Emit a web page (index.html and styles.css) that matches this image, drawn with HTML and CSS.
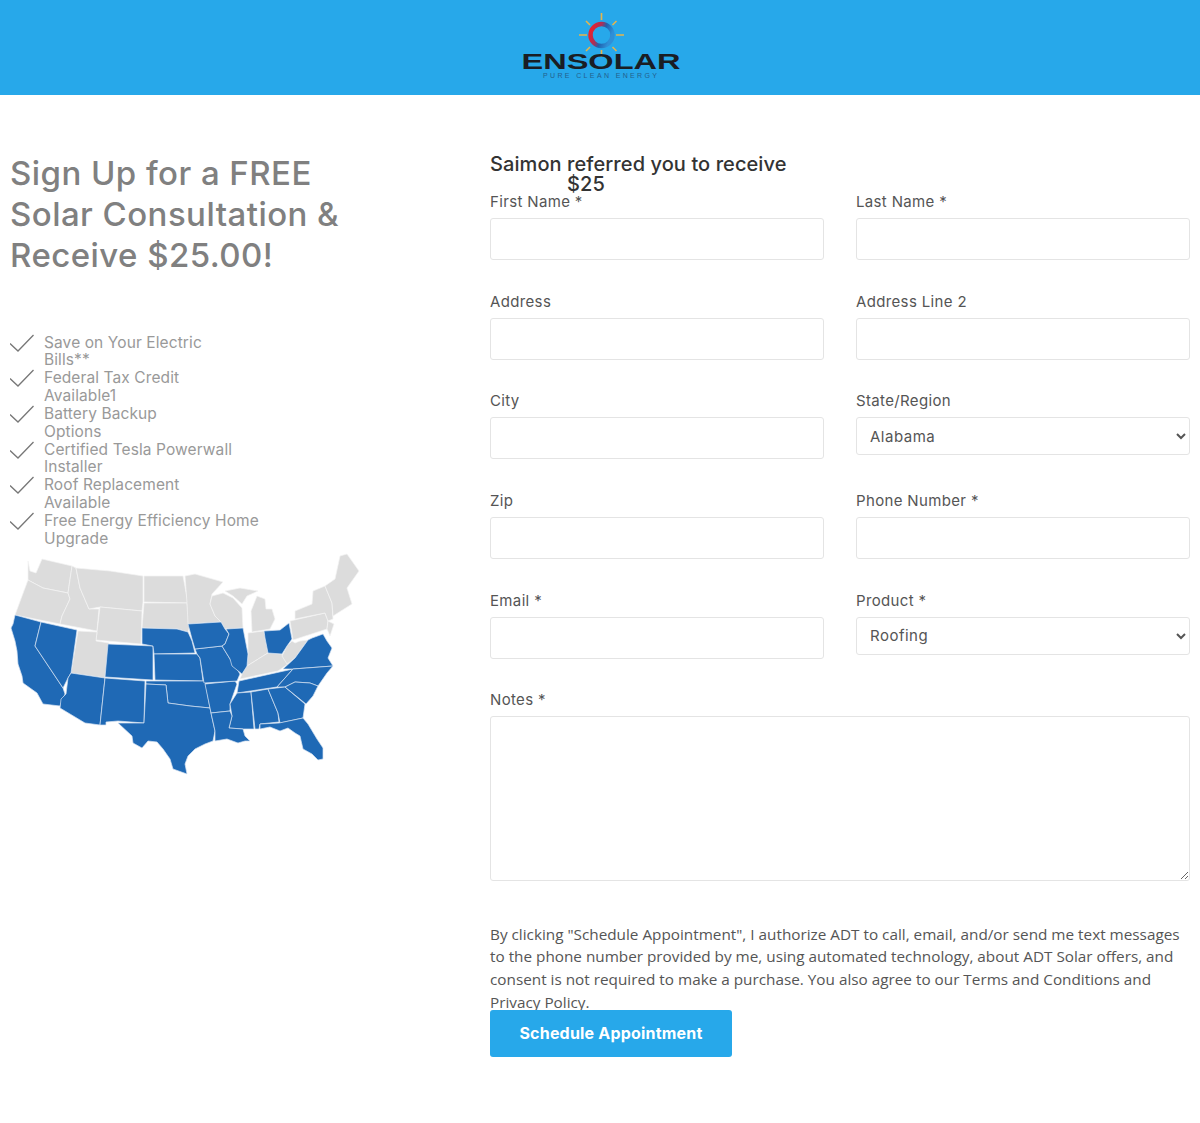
FILE: index.html
```html
<!DOCTYPE html>
<html>
<head>
  <title>Ensolar - Sign Up</title>
  <link rel="stylesheet" href="styles.css">
</head>
<body>
  <header class="topbar">
    <svg class="logo" width="200" height="95" viewBox="500 0 200 95">
      <defs>
        <linearGradient id="ringGrad" x1="0" y1="0" x2="1" y2="0.4">
          <stop offset="0.1" stop-color="#e8202c"/>
          <stop offset="0.45" stop-color="#a8305a"/>
          <stop offset="0.65" stop-color="#1f62ad"/>
          <stop offset="1" stop-color="#2f8fd8"/>
        </linearGradient>
      </defs>
      <g class="rays">
        <path d="M601.5 13v7M601.5 50v7M579 35h8M616 35h8M586 21l4 4M616.500 21l-4 4M586 51l4-4M616.500 51l-4-4"/>
      </g>
      <circle class="ring" cx="601.500" cy="35" r="11"/>
      <text class="logo-name" x="521.500" y="68.500" textLength="159" lengthAdjust="spacingAndGlyphs">ENSOLAR</text>
      <text class="logo-tag" x="543" y="78" textLength="114">PURE CLEAN ENERGY</text>
    </svg>
  </header>

  <main class="page">
    <section class="intro">
      <h1>Sign Up for a FREE Solar Consultation &amp; Receive $25.00!</h1>

      <ul class="benefits">
        <li><svg class="check" width="24" height="18" viewBox="0 0 24 18"><path d="M0 9.500l8 7.500L23.500 1"/></svg><span>Save on Your Electric<br>Bills**</span></li>
        <li><svg class="check" width="24" height="18" viewBox="0 0 24 18"><path d="M0 9.500l8 7.500L23.500 1"/></svg><span>Federal Tax Credit<br>Available1</span></li>
        <li><svg class="check" width="24" height="18" viewBox="0 0 24 18"><path d="M0 9.500l8 7.500L23.500 1"/></svg><span>Battery Backup<br>Options</span></li>
        <li><svg class="check" width="24" height="18" viewBox="0 0 24 18"><path d="M0 9.500l8 7.500L23.500 1"/></svg><span>Certified Tesla Powerwall<br>Installer</span></li>
        <li><svg class="check" width="24" height="18" viewBox="0 0 24 18"><path d="M0 9.500l8 7.500L23.500 1"/></svg><span>Roof Replacement<br>Available</span></li>
        <li><svg class="check" width="24" height="18" viewBox="0 0 24 18"><path d="M0 9.500l8 7.500L23.500 1"/></svg><span>Free Energy Efficiency Home<br>Upgrade</span></li>
      </ul>

      <svg class="map" width="360" height="235" viewBox="10 545 360 235">
        <g class="st-off">
          <polygon points="28,560 30,570 36,572 42,558 72,565 68,592 43,587 28,579"/>
          <polygon points="28,579 43,587 68,592 70,598 62,615 60,623 15,614 22,595"/>
          <polygon points="72,565 76,567 80,587 89,608 99,608 97,630 60,623 62,615 70,598 68,592"/>
          <polygon points="76,567 110,570 143,575 143,601 142,610 100,606 89,608 80,587"/>
          <polygon points="100,606 142,610 141,643 96,639"/>
          <polygon points="144,575 183,575 188,602 144,601"/>
          <polygon points="144,602 187,602 190,625 188,631 177,628 142,627"/>
          <polygon points="78,630 97,631 96,640 109,642 105,677 71,672"/>
          <polygon points="185,575 195,573 209,577 223,581 212,593 210,603 215,615 221,621 188,623 187,602"/>
          <polygon points="212,595 223,592 233,597 242,607 243,627 225,628 221,621 215,615 210,603"/>
          <polygon points="225,590 240,587 258,590 247,595 242,603 233,595"/>
          <polygon points="257,595 265,598 266,608 272,608 275,618 270,628 252,631 251,610"/>
          <polygon points="248,632 264,630 268,652 263,655 247,665 248,653"/>
          <polygon points="247,665 263,655 268,652 282,653 288,663 278,670 240,678 242,673"/>
          <polygon points="282,655 287,645 292,640 295,642 300,640 308,639 302,647 295,657 287,663"/>
          <polygon points="290,620 325,612 328,620 327,628 293,639"/>
          <polygon points="295,610 312,603 313,590 325,585 332,602 333,618 328,620 325,612 295,618"/>
          <polygon points="325,585 335,578 340,555 347,553 359,570 347,587 352,603 333,615 332,602"/>
          <polygon points="328,620 334,623 330,635 327,628"/>
        </g>
        <g class="st-on">
          <polygon points="15,614 41,621 35,645 63,687 65,693 60,705 43,703 37,692 30,687 23,682 22,675 18,663 17,650 15,640 11,627 13,623"/>
          <polygon points="41,621 77,629 71,672 68,677 63,687 35,645"/>
          <polygon points="71,672 105,677 100,724 85,722 60,707 61,698 66,693 68,677"/>
          <polygon points="105,677 145,680 144,722 118,720 106,721 106,724 100,724"/>
          <polygon points="108,643 153,645 153,679 105,676"/>
          <polygon points="142,627 177,628 188,631 192,640 195,652 154,653 153,645 142,643"/>
          <polygon points="154,653 197,653 200,657 203,680 155,679"/>
          <polygon points="146,680 205,680 210,707 190,705 168,702 166,684 146,683"/>
          <polygon points="146,683 166,684 168,702 190,705 210,707 211,712 215,730 213,740 205,743 195,748 188,755 185,763 187,773 173,768 170,758 163,748 157,741 148,740 142,747 133,742 132,735 118,722 144,722"/>
          <polygon points="205,683 235,680 237,683 230,703 230,710 211,712 210,707"/>
          <polygon points="195,648 222,645 230,658 235,665 240,673 237,680 204,682 200,657 197,653"/>
          <polygon points="188,623 221,621 225,628 229,633 225,643 222,645 195,648 192,638"/>
          <polygon points="226,628 243,627 248,653 247,665 242,673 232,665 230,658 222,645 225,643 229,633"/>
          <polygon points="264,630 280,629 289,622 292,638 287,645 282,653 268,652 265,637"/>
          <polygon points="239,680 293,668 277,686 237,692"/>
          <polygon points="283,668 295,657 308,639 312,637 323,633 327,640 332,647 328,657 333,665 293,668"/>
          <polygon points="277,686 293,668 333,665 327,672 318,685 310,682 295,681 285,686"/>
          <polygon points="237,692 251,691 254,728 243,728 229,727 232,715 230,703"/>
          <polygon points="211,712 230,710 232,715 229,727 243,728 245,735 250,740 245,740 238,742 227,738 215,740 215,730"/>
          <polygon points="251,691 268,688 278,712 279,721 260,723 259,728 255,728"/>
          <polygon points="268,688 285,686 305,703 303,717 280,722 278,712"/>
          <polygon points="285,686 295,681 310,682 318,685 313,695 306,703"/>
          <polygon points="260,723 279,722 303,717 308,723 317,738 323,747 323,758 318,759 312,753 303,748 300,735 295,732 288,727 280,730 270,726 260,728"/>
        </g>
      </svg>
    </section>

    <section class="signup">
      <h2><span>Saimon referred you to receive</span><span class="amount">$25</span></h2>

      <form class="form-grid">
        <div class="field"><label for="first">First Name *</label><input id="first" type="text"></div>
        <div class="field"><label for="last">Last Name *</label><input id="last" type="text"></div>
        <div class="field"><label for="addr">Address</label><input id="addr" type="text"></div>
        <div class="field"><label for="addr2">Address Line 2</label><input id="addr2" type="text"></div>
        <div class="field"><label for="city">City</label><input id="city" type="text"></div>
        <div class="field">
          <label for="state">State/Region</label>
          <select id="state"><option>Alabama</option></select>
        </div>
        <div class="field"><label for="zip">Zip</label><input id="zip" type="text"></div>
        <div class="field"><label for="phone">Phone Number *</label><input id="phone" type="tel"></div>
        <div class="field"><label for="email">Email *</label><input id="email" type="email"></div>
        <div class="field">
          <label for="product">Product *</label>
          <select id="product"><option>Roofing</option></select>
        </div>
        <div class="field field-wide"><label for="notes">Notes *</label><textarea id="notes"></textarea></div>
      </form>

      <p class="legal">By clicking "Schedule Appointment", I authorize ADT to call, email, and/or send me text messages to the phone number provided by me, using automated technology, about ADT Solar offers, and consent is not required to make a purchase. You also agree to our Terms and Conditions and Privacy Policy.</p>
      <button class="submit" type="button">Schedule Appointment</button>
    </section>
  </main>
</body>
</html>
```

FILE: styles.css
```css
body {
  font-family: Inter, "Noto Sans", sans-serif;
  margin: 0;
  background-color: #fff;
}

.topbar {
  display: flex;
  justify-content: center;
  height: 95px;
  background-color: #27a8ea;
}

.logo {
  display: block;
}

.rays path {
  fill: none;
  stroke: #e6b44c;
  stroke-width: 1.6;
}

.ring {
  fill: none;
  stroke: url(#ringGrad);
  stroke-width: 4.5;
}

.logo-name {
  font-family: "Liberation Sans", sans-serif;
  font-size: 22px;
  font-weight: bold;
  fill: #1a1d24;
}

.logo-tag {
  font-family: "Liberation Sans", sans-serif;
  font-size: 7px;
  fill: #24608c;
}

.page {
  display: grid;
  grid-template-columns: 490px 700px;
}

.intro {
  padding: 58px 0 0 10px;
}

h1 {
  width: 345px;
  margin: 0;
  font-size: 33px;
  font-weight: 500;
  letter-spacing: 0.45px;
  line-height: 41px;
  color: #808080;
}

.benefits {
  list-style: none;
  margin: 57.500px 0 0;
  padding: 0;
  font-size: 15.5px;
  letter-spacing: 0.1px;
  line-height: 17.85px;
  color: #999;
}

.benefits li {
  display: flex;
  gap: 10px;
}

.check {
  flex: none;
}

.check path {
  fill: none;
  stroke: #777;
  stroke-width: 1.3;
}

.map {
  display: block;
  margin-top: -2px;
}

.st-off polygon {
  fill: #dcdcdc;
  stroke: #f4f4f4;
  stroke-width: 0.7;
  stroke-linejoin: round;
}

.st-on polygon {
  fill: #1f69b5;
  stroke: #d5e3f2;
  stroke-width: 0.7;
  stroke-linejoin: round;
}

.signup {
  padding-top: 59px;
}

h2 {
  margin: 0;
  font-size: 20px;
  font-weight: 500;
  letter-spacing: 0.08px;
  line-height: 20px;
  color: #333;
}

h2 span {
  display: block;
}

.amount {
  padding-left: 77px;
}

.form-grid {
  display: grid;
  grid-template-columns: 333.500px 334px;
  column-gap: 32.500px;
  width: 700px;
  margin-top: -1px;
}

.field {
  height: 99.67px;
}

.field-wide {
  grid-column: 1 / 3;
  height: 190px;
}

label {
  display: block;
  height: 18px;
  margin-bottom: 7px;
  font-size: 15px;
  letter-spacing: 0.35px;
  line-height: 18px;
  color: #555;
}

input,
select,
textarea {
  display: block;
  width: 100%;
  box-sizing: border-box;
  font-family: inherit;
  font-size: 15px;
  letter-spacing: 0.5px;
  color: #555;
  background-color: #fff;
  border: 1px solid #e4e4e4;
  border-radius: 3px;
}

input {
  height: 42px;
}

select {
  height: 38px;
  padding-left: 9px;
}

textarea {
  height: 165px;
}

.legal {
  width: 695px;
  margin: 41.500px 0 0;
  font-family: "Open Sans", sans-serif;
  font-size: 15.3px;
  line-height: 22.700px;
  color: #555;
}

.submit {
  display: block;
  width: 242px;
  height: 46.500px;
  margin-top: -3.500px;
  position: relative;
  font-family: inherit;
  font-size: 16px;
  font-weight: 700;
  letter-spacing: 0.2px;
  color: #fff;
  background-color: #27a8ea;
  border: none;
  border-radius: 3px;
  cursor: pointer;
}
```
